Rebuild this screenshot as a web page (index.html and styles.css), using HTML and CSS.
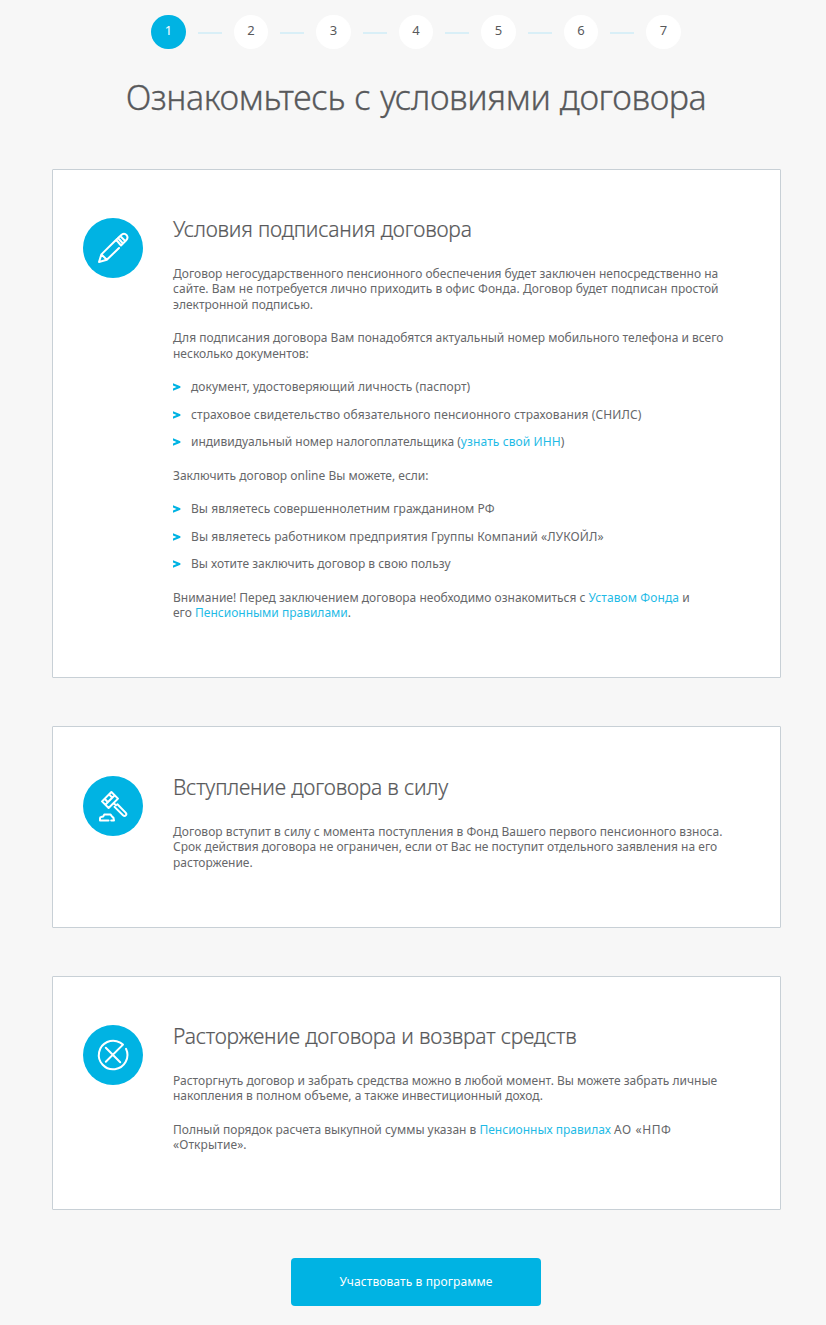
FILE: index.html
```html
<!DOCTYPE html>
<html lang="ru">
<head>
<meta charset="utf-8">
<title>Ознакомьтесь с условиями договора</title>
<link rel="stylesheet" href="styles.css">
</head>
<body>
<main class="page">
  <ol class="steps">
    <li class="step step-active">1</li><li class="dash"></li>
    <li class="step">2</li><li class="dash"></li>
    <li class="step">3</li><li class="dash"></li>
    <li class="step">4</li><li class="dash"></li>
    <li class="step">5</li><li class="dash"></li>
    <li class="step">6</li><li class="dash"></li>
    <li class="step">7</li>
  </ol>
  <h1 class="title">Ознакомьтесь с условиями договора</h1>

  <section class="card card-sign">
    <svg class="icon" viewBox="0 0 60 60">
      <circle class="disc" cx="30" cy="30" r="30"/>
      <path d="M16 44L18.4 36.4L35 20L40 25.5M18.4 36.4L23.8 41.8L36 30M16 44L23.8 41.8M35 20L38.6 16.8Q41.4 14.6 43.6 17.2Q45.6 19.8 43.2 22.2L38 27.5L33.5 22.2M37.2 18L42.2 23"/>
    </svg>
    <div class="body">
      <h2 class="heading">Условия подписания договора</h2>
      <p class="text">Договор негосударственного пенсионного обеспечения будет заключен непосредственно на<br><span class="loose">сайте. Вам не потребуется лично приходить в офис Фонда. Договор будет подписан простой</span><br>электронной подписью.</p>
      <p class="text">Для подписания договора Вам понадобятся актуальный номер мобильного телефона и всего<br>несколько документов:</p>
      <ul class="list">
        <li class="item"><svg class="arrow" viewBox="0 0 8 8"><path d="M0 .3L7.4 3.3V4.7L0 7.7V5.5L3.6 4L0 2.5Z"/></svg><span class="loose">документ, удостоверяющий личность (паспорт)</span></li>
        <li class="item"><svg class="arrow" viewBox="0 0 8 8"><path d="M0 .3L7.4 3.3V4.7L0 7.7V5.5L3.6 4L0 2.5Z"/></svg><span class="looser">страховое свидетельство обязательного пенсионного страхования (СНИЛС)</span></li>
        <li class="item"><svg class="arrow" viewBox="0 0 8 8"><path d="M0 .3L7.4 3.3V4.7L0 7.7V5.5L3.6 4L0 2.5Z"/></svg><span>индивидуальный номер налогоплательщика (<a class="link looser">узнать свой ИНН</a>)</span></li>
      </ul>
      <p class="text">Заключить договор online Вы можете, если:</p>
      <ul class="list">
        <li class="item"><svg class="arrow" viewBox="0 0 8 8"><path d="M0 .3L7.4 3.3V4.7L0 7.7V5.5L3.6 4L0 2.5Z"/></svg><span class="loose">Вы являетесь совершеннолетним гражданином РФ</span></li>
        <li class="item"><svg class="arrow" viewBox="0 0 8 8"><path d="M0 .3L7.4 3.3V4.7L0 7.7V5.5L3.6 4L0 2.5Z"/></svg><span class="looser">Вы являетесь работником предприятия Группы Компаний «ЛУКОЙЛ»</span></li>
        <li class="item"><svg class="arrow" viewBox="0 0 8 8"><path d="M0 .3L7.4 3.3V4.7L0 7.7V5.5L3.6 4L0 2.5Z"/></svg><span>Вы хотите заключить договор в свою пользу</span></li>
      </ul>
      <p class="text">Внимание! Перед заключением договора необходимо ознакомиться с <a class="link looser">Уставом Фонда</a> и<br>его <a class="link">Пенсионными правилами</a>.</p>
    </div>
  </section>

  <section class="card card-force">
    <svg class="icon" viewBox="0 0 60 60">
      <circle class="disc" cx="30" cy="30" r="30"/>
      <path d="M19 25.4L28.4 16L35 22.6L25.6 32ZM22.3 28.7L31.7 19.3M26 18.4L28.4 20.8M21.6 22.8L24 25.2M30.6 27L33 29.4M31.5 30.9L40 39.2Q41.6 40.6 42.8 39.4Q44 38 42.6 36.6L34.4 28.2M17 44.4V42.2Q17 41.2 18 41L20.2 40.5L21.2 38.6H27.6L29 40.5Q31 41.5 31 44.4H28.2M17 44.4H25.5"/>
    </svg>
    <div class="body">
      <h2 class="heading">Вступление договора в силу</h2>
      <p class="text"><span class="loose">Договор вступит в силу с момента поступления в Фонд Вашего первого пенсионного взноса.</span><br>Срок действия договора не ограничен, если от Вас не поступит отдельного заявления на его<br>расторжение.</p>
    </div>
  </section>

  <section class="card card-refund">
    <svg class="icon" viewBox="0 0 60 60">
      <circle class="disc" cx="30" cy="30" r="30"/>
      <path d="M43 23.8A14.3 14.3 0 1 1 37.2 17.6L40 19.6L22.8 36.8M22.8 22.8L37.2 37.2"/>
    </svg>
    <div class="body">
      <h2 class="heading">Расторжение договора и возврат средств</h2>
      <p class="text">Расторгнуть договор и забрать средства можно в любой момент. Вы можете забрать личные<br>накопления в полном объеме, а также инвестиционный доход.</p>
      <p class="text">Полный порядок расчета выкупной суммы указан в <a class="link">Пенсионных правилах</a> <span class="caps">АО «НПФ</span><br><span class="looser">«Открытие».</span></p>
    </div>
  </section>

  <button class="submit" type="button">Участвовать в программе</button>
</main>
</body>
</html>
```
FILE: styles.css
```css
* { box-sizing: border-box; }
body {
  margin: 0;
  background: #f7f7f7;
  color: #58595b;
  font-family: "Noto Sans", "Open Sans", sans-serif;
}
.page {
  display: flex;
  flex-direction: column;
  align-items: center;
  height: 1325px;
  padding: 14.5px 46px 0 52px;
}
.steps {
  display: flex;
  gap: 12px;
  margin: 0;
  padding: 0;
  list-style: none;
}
.step {
  width: 34.5px;
  height: 34.5px;
  border-radius: 50%;
  background: #fff;
  font-size: 13px;
  line-height: 31px;
  text-align: center;
}
.step-active { background: #00b3e3; color: #fff; }
.dash {
  width: 24px;
  height: 2px;
  margin-top: 17.5px;
  background: #d9eff7;
}
.title {
  margin: 23px 0 47px;
  font-size: 34px;
  font-weight: 300;
  line-height: 50px;
  letter-spacing: -0.4px;
  word-spacing: 1px;
  white-space: nowrap;
  -webkit-text-stroke: 0.3px #58595b;
}
.card {
  display: flex;
  gap: 30px;
  align-self: flex-start;
  width: 729px;
  margin-bottom: 48px;
  padding: 48px 30px 0;
  border: 1px solid #c8d0d6;
  border-radius: 1px;
  background: #fff;
  flex: none;
}
.card-sign { height: 509px; }
.card-force { height: 202px; padding-top: 49px; }
.card-refund { height: 234px; }
.icon { width: 60px; height: 60px; flex: none; }
.icon path {
  fill: none;
  stroke: #fff;
  stroke-width: 2;
  stroke-linecap: round;
  stroke-linejoin: round;
}
.disc { fill: #00b3e3; }
.body { margin-top: -2px; white-space: nowrap; }
.heading {
  margin: 0 0 23.8px;
  font-size: 21px;
  font-weight: 300;
  line-height: 26px;
  letter-spacing: -0.19px;
  -webkit-text-stroke: 0.2px #58595b;
}
.text, .list {
  margin: 0 0 18px;
  color: #66676a;
  font-size: 12px;
  line-height: 15.5px;
}
.list { padding: 0; list-style: none; }
.item { display: flex; gap: 10px; margin-bottom: 12px; }
.item:last-child { margin-bottom: 0; }
.arrow { width: 8px; height: 8px; margin-top: 4px; fill: #00b3e3; }
.link { color: #1fbbe6; }
.loose { letter-spacing: 0.045px; }
.looser { letter-spacing: 0.1px; }
.caps { letter-spacing: 0.6px; }
.submit {
  width: 250px;
  height: 48px;
  padding: 0 0 1px;
  border: 0;
  border-radius: 4px;
  background: #00b3e3;
  color: #fff;
  font: 400 12px/47px "Noto Sans", sans-serif;
  letter-spacing: 0.1px;
}
```
